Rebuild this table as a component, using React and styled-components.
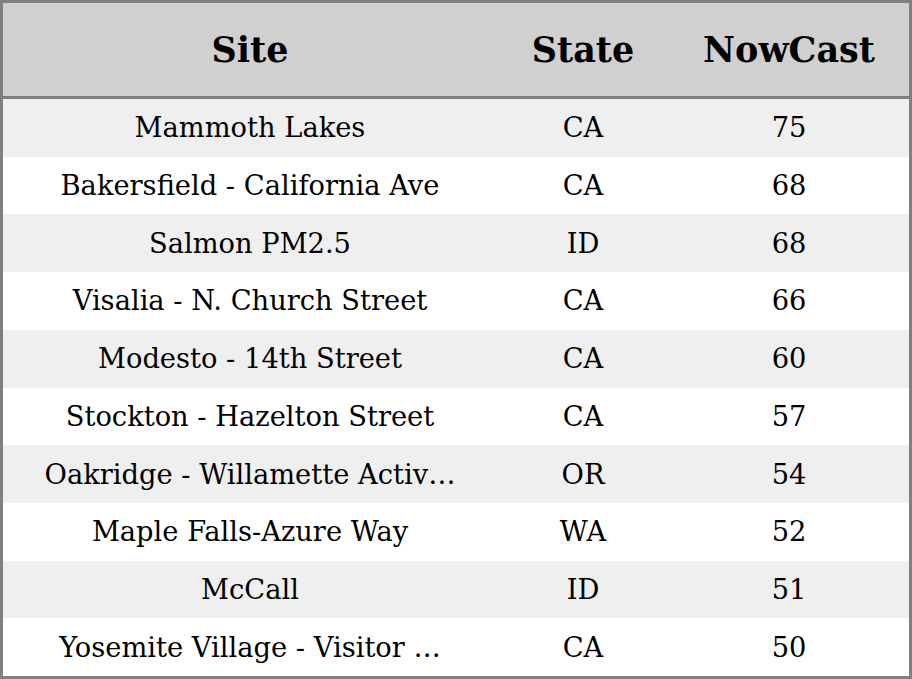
import React from "react";
import styled, { createGlobalStyle } from "styled-components";

const sites = [
  { site: "Mammoth Lakes", state: "CA", nowcast: 75 },
  { site: "Bakersfield - California Ave", state: "CA", nowcast: 68 },
  { site: "Salmon PM2.5", state: "ID", nowcast: 68 },
  { site: "Visalia - N. Church Street", state: "CA", nowcast: 66 },
  { site: "Modesto - 14th Street", state: "CA", nowcast: 60 },
  { site: "Stockton - Hazelton Street", state: "CA", nowcast: 57 },
  { site: "Oakridge - Willamette Activity Center", state: "OR", nowcast: 54 },
  { site: "Maple Falls-Azure Way", state: "WA", nowcast: 52 },
  { site: "McCall", state: "ID", nowcast: 51 },
  { site: "Yosemite Village - Visitor Center", state: "CA", nowcast: 50 },
];

// long names get cut to 27 chars + ellipsis
const truncate = (s) => (s.length > 30 ? s.slice(0, 27) + "…" : s);

const App = () => {
  return (
    <>
      <GlobalStyle />
      <Table>
        <Header>
          <HeadCell>Site</HeadCell>
          <HeadCell>State</HeadCell>
          <HeadCell>NowCast</HeadCell>
        </Header>
        {sites.map((r, i) => (
          <Row key={r.site} $striped={i % 2 === 0}>
            <Cell>{truncate(r.site)}</Cell>
            <Cell>{r.state}</Cell>
            <Cell>{r.nowcast}</Cell>
          </Row>
        ))}
      </Table>
    </>
  );
};

export default App;

const GlobalStyle = createGlobalStyle`
  html, body {
    margin: 0;
    padding: 0;
    background: #fff;
  }
  * {
    box-sizing: border-box;
  }
`;

const Table = styled.div`
  display: flex;
  flex-direction: column;
  width: 912px;
  height: 679px;
  border: 3px solid #808080;
  font-family: "DejaVu Serif", serif;
  color: #000;
`;

const cols = "494px 172px 240px";

const Header = styled.div`
  display: grid;
  grid-template-columns: ${cols};
  height: 96px;
  flex: none;
  background: #d0d0d0;
  border-bottom: 3px solid #808080;
`;

const HeadCell = styled.div`
  display: flex;
  align-items: center;
  justify-content: center;
  font-size: 35px;
  font-weight: bold;
  padding-bottom: 1px;
`;

const Row = styled.div`
  display: grid;
  grid-template-columns: ${cols};
  flex: 1;
  background: ${(p) => (p.$striped ? "#efefef" : "#fff")};
`;

const Cell = styled.div`
  display: flex;
  align-items: center;
  justify-content: center;
  font-size: 27.3px;
  white-space: nowrap;
`;
